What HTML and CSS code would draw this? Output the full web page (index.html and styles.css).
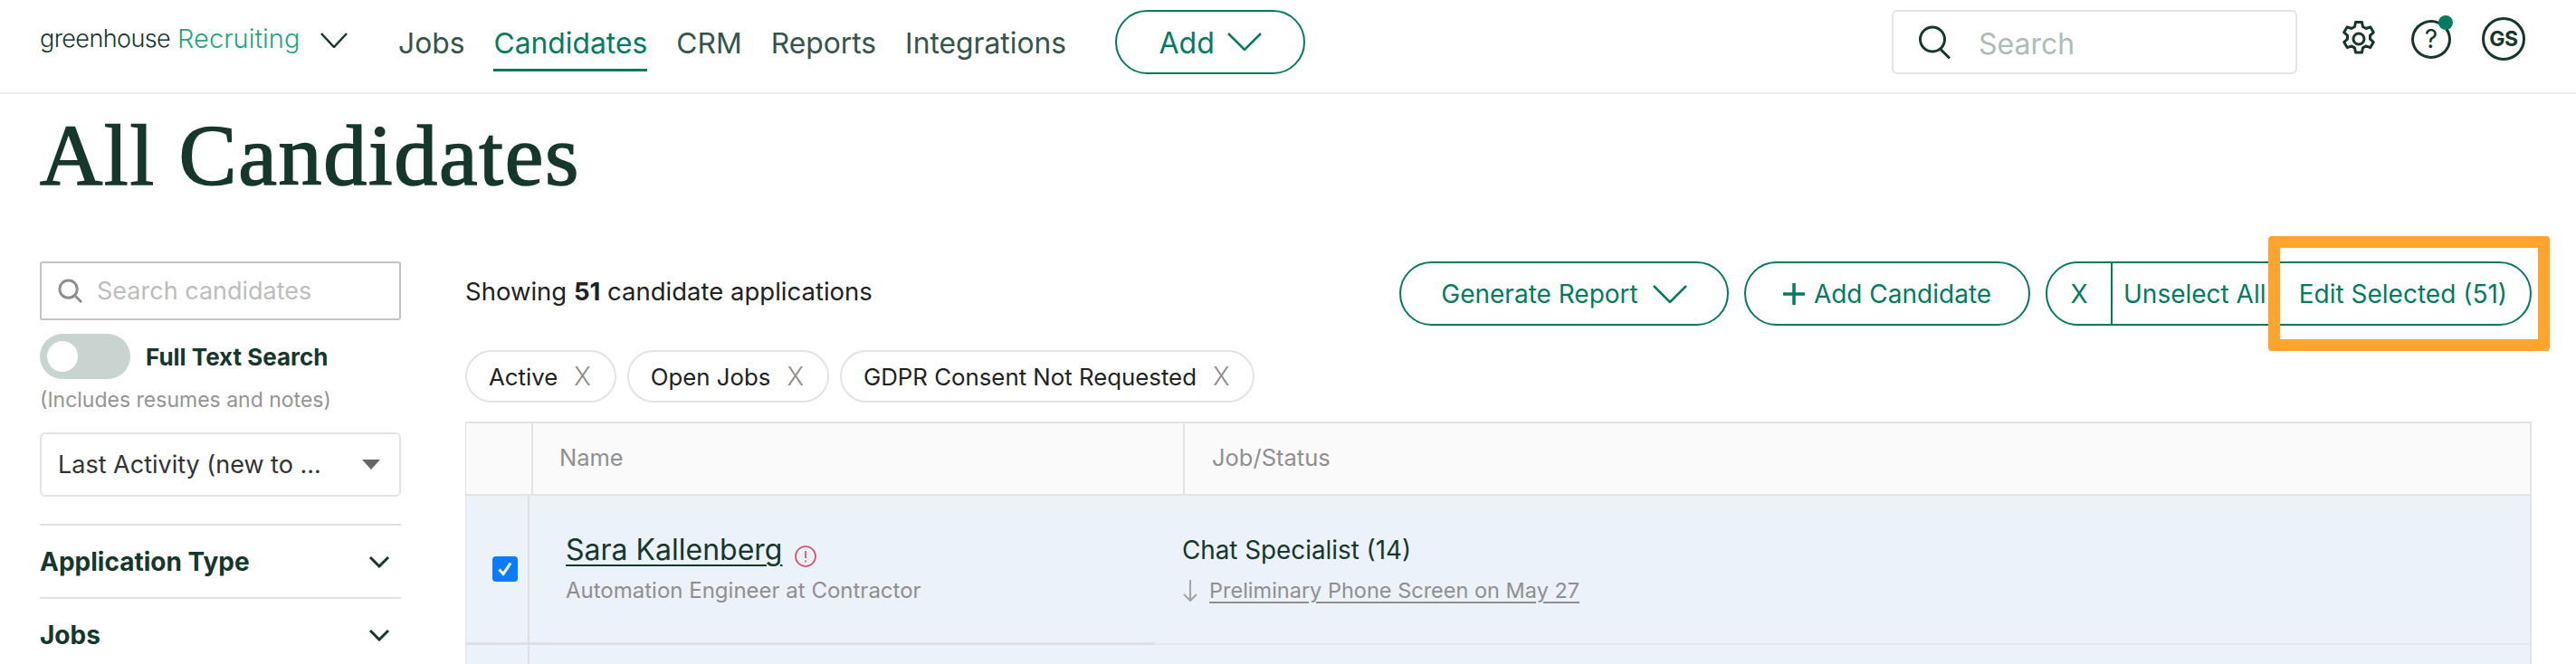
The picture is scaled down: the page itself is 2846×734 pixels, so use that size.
FILE: index.html
```html
<!DOCTYPE html>
<html lang="en">
<head>
<meta charset="utf-8">
<title>All Candidates</title>
<link rel="stylesheet" href="styles.css">
</head>
<body>
<header class="topbar">
  <div class="logo"><span class="logo-main">greenhouse</span><span class="logo-sub">Recruiting</span>
    <svg class="logo-chev" viewBox="0 0 30 17"><path d="M1 1l14 15L29 1"/></svg>
  </div>
  <nav class="nav">
    <a class="nav-link">Jobs</a>
    <a class="nav-link nav-active">Candidates</a>
    <a class="nav-link">CRM</a>
    <a class="nav-link">Reports</a>
    <a class="nav-link">Integrations</a>
  </nav>
  <button class="add-btn">Add
    <svg class="add-chev" viewBox="0 0 38 20"><path d="M1 1l18 18L37 1"/></svg>
  </button>
  <div class="global-search">
    <svg class="global-search-icon" viewBox="0 0 36 36"><circle cx="15" cy="15" r="13.5"/><path d="M24 26l10 10"/></svg>
    <span>Search</span>
  </div>
  <div class="top-icons">
    <svg class="gear" viewBox="0 0 40 40"><path d="M16.5 1.5h7l1 5 3.500 2 4.800-1.700 3.500 6-3.800 3.400v4l3.800 3.400-3.500 6-4.800-1.700-3.500 2-1 5h-7l-1-5-3.500-2-4.800 1.700-3.500-6 3.800-3.400v-4l-3.800-3.400 3.500-6 4.800 1.700 3.500-2z"/><circle cx="20" cy="20" r="6"/></svg>
    <div class="help"><span>?</span><i class="help-dot"></i></div>
    <div class="avatar">GS</div>
  </div>
</header>

<h1 class="page-title">All Candidates</h1>

<div class="layout">
  <aside class="sidebar">
    <div class="side-search">
      <svg class="side-search-icon" viewBox="0 0 28 28"><circle cx="12" cy="12" r="10"/><path d="M19 19l8 8"/></svg>
      <span>Search candidates</span>
    </div>
    <div class="toggle-row"><span class="toggle"><i class="knob"></i></span><b class="toggle-label">Full Text Search</b></div>
    <p class="toggle-note">(Includes resumes and notes)</p>
    <div class="sort-select"><span>Last Activity (new to ...</span><i class="caret"></i></div>
    <div class="filter filter-first"><span>Application Type</span><svg class="filter-chev" viewBox="0 0 24 14"><path d="M2 2l10 10L22 2"/></svg></div>
    <div class="filter"><span>Jobs</span><svg class="filter-chev" viewBox="0 0 24 14"><path d="M2 2l10 10L22 2"/></svg></div>
  </aside>

  <main class="content">
    <div class="toolbar">
      <p class="showing">Showing <b>51</b> candidate applications</p>
      <div class="actions">
        <button class="pill-btn btn-report">Generate Report
          <svg class="report-chev" viewBox="0 0 38 20"><path d="M1 1l18 18L37 1"/></svg>
        </button>
        <button class="pill-btn btn-add"><svg class="plus" viewBox="0 0 24 24"><path d="M12 0v24M0 12h24"/></svg>Add Candidate</button>
        <div class="group">
          <span class="group-x">X</span>
          <span class="group-unselect">Unselect All</span>
          <span class="group-edit">Edit Selected (51)</span>
          <i class="highlight"></i>
        </div>
      </div>
    </div>

    <div class="chips">
      <span class="chip">Active<i class="chip-x">X</i></span>
      <span class="chip">Open Jobs<i class="chip-x">X</i></span>
      <span class="chip">GDPR Consent Not Requested<i class="chip-x">X</i></span>
    </div>

    <div class="table">
      <div class="thead">
        <div class="th"></div>
        <div class="th th-name">Name</div>
        <div class="th th-job">Job/Status</div>
      </div>
      <div class="row">
        <div class="cell-check"><span class="checkbox"><svg viewBox="0 0 28 28"><path d="M7.500 14.500l4.500 5 8-12"/></svg></span></div>
        <div class="cell-name">
          <div class="cand-line"><a class="cand-name">Sara Kallenberg</a>
            <svg class="warn" viewBox="0 0 24 24"><circle cx="12" cy="12" r="11"/><path d="M12 6v8M12 16.500v2"/></svg>
          </div>
          <div class="cand-sub">Automation Engineer at Contractor</div>
        </div>
        <div class="cell-job">
          <div class="job-title">Chat Specialist (14)</div>
          <div class="job-stage"><svg class="arrow" viewBox="0 0 18 24"><path d="M9 0v23M2 16l7 7 7-7"/></svg><a>Preliminary Phone Screen on May 27</a></div>
        </div>
      </div>
      <div class="row row-next">
        <div class="cell-check"></div>
        <div class="cell-name"></div>
        <div class="cell-job"></div>
      </div>
    </div>
  </main>
</div>
</body>
</html>
```
FILE: styles.css
```css
* { box-sizing: border-box; }
html, body { margin: 0; padding: 0; }
body {
  width: 2846px;
  height: 734px;
  overflow: hidden;
  background: #fff;
  font-family: Inter, "Noto Sans", sans-serif;
  color: #15372c;
}
p, h1 { margin: 0; }
svg { display: block; fill: none; }
button { font-family: inherit; background: #fff; padding: 0; }

.topbar {
  display: flex;
  align-items: flex-start;
  height: 104px;
  padding: 11px 56px 0 44px;
  border-bottom: 2px solid #eeeeee;
}
.logo { display: flex; align-items: center; height: 44px; width: 396px; margin-top: 9px; flex: none; }
.logo-main { font-size: 27px; font-weight: 300; letter-spacing: -0.6px; color: #15372c; }
.logo-sub { font-size: 29px; font-weight: 300; letter-spacing: 0; color: #24a47f; margin-left: 8px; }
.logo-chev { width: 30px; height: 17px; margin-left: 23px; margin-top: 4px; }
.logo-chev path { stroke: #15372c; stroke-width: 2.500; }

.nav { display: flex; gap: 32px; flex: none; }
.nav-link {
  font-size: 31.800px;
  line-height: 38px;
  padding: 18px 0 9px;
  color: #36544a;
  border-bottom: 2px solid transparent;
}
.nav-active { color: #047b5e; border-bottom: 3px solid #047b5e; }

.add-btn {
  display: flex;
  align-items: center;
  justify-content: center;
  gap: 14px;
  width: 210px;
  height: 71px;
  margin-left: 54px;
  padding-top: 2px;
  border: 2px solid #047b5e;
  border-radius: 36px;
  color: #047b5e;
  font-size: 32px;
  flex: none;
}
.add-chev { width: 38px; height: 20px; margin-top: -4px; }
.add-chev path, .report-chev path { stroke: #047b5e; stroke-width: 2.500; }

.global-search {
  display: flex;
  align-items: center;
  gap: 30px;
  width: 448px;
  height: 71px;
  margin-left: auto;
  padding-left: 28px;
  border: 2px solid #e1e6e4;
  border-radius: 6px;
  color: #aebcb7;
  font-size: 32px;
}
.global-search span { padding-top: 3px; }
.global-search-icon { width: 36px; height: 37px; overflow: visible; }
.global-search-icon circle, .global-search-icon path { stroke: #15372c; stroke-width: 3; }

.top-icons { display: flex; align-items: center; margin-left: 48px; margin-top: 8px; flex: none; }
.gear { width: 40px; height: 40px; overflow: visible; }
.gear path, .gear circle { stroke: #15372c; stroke-width: 3; stroke-linejoin: round; }
.help {
  position: relative;
  display: flex;
  align-items: center;
  justify-content: center;
  width: 44px;
  height: 43px;
  margin-left: 38px;
  border: 3px solid #15372c;
  border-radius: 50%;
  font-size: 28px;
  font-weight: 400;
  color: #15372c;
}
.help-dot {
  position: absolute;
  top: -8px;
  right: -5px;
  width: 16px;
  height: 16px;
  border-radius: 50%;
  background: #047b5e;
}
.avatar {
  display: flex;
  align-items: center;
  justify-content: center;
  width: 48px;
  height: 48px;
  margin-left: 34px;
  border: 3px solid #15372c;
  border-radius: 50%;
  font-size: 23px;
  font-weight: 700;
  letter-spacing: -0.5px;
}

.page-title {
  padding-left: 44px;
  font-family: "Liberation Serif", serif;
  font-weight: 400;
  font-size: 96px;
  line-height: 110px;
  letter-spacing: 1.7px;
  margin-top: 13px;
  color: #15372c;
  -webkit-text-stroke: 1.6px #15372c;
}

.layout {
  display: grid;
  grid-template-columns: 399px 2283px;
  column-gap: 71px;
  padding-left: 44px;
  margin-top: 62px;
}

.side-search {
  display: flex;
  align-items: center;
  gap: 16px;
  height: 65px;
  padding-left: 18px;
  border: 2px solid #c4c4c4;
  border-radius: 3px;
  color: #bdbdbd;
  font-size: 27px;
}
.side-search-icon { width: 27px; height: 27px; }
.side-search-icon circle, .side-search-icon path { stroke: #8e8e8e; stroke-width: 3; }

.toggle-row { display: flex; align-items: center; gap: 17px; margin-top: 15px; }
.toggle { display: block; width: 100px; height: 50px; padding: 8px; border-radius: 25px; background: #c9d3d0; }
.knob { display: block; width: 34px; height: 34px; border-radius: 50%; background: #fff; }
.toggle-label { font-size: 26px; font-weight: 700; }
.toggle-note { margin-top: 7px; font-size: 23px; line-height: 32px; color: #949494; }

.sort-select {
  display: flex;
  align-items: center;
  justify-content: space-between;
  height: 71px;
  margin-top: 20px;
  padding: 0 21px 0 18px;
  border: 2px solid #e3e3e3;
  border-radius: 6px;
  font-size: 27px;
  color: #333;
}
.caret { width: 0; height: 0; border-style: solid; border-width: 11px 10px 0; border-color: #666 transparent transparent; }

.filter {
  display: flex;
  align-items: center;
  justify-content: space-between;
  height: 81px;
  padding-right: 12px;
  border-top: 2px solid #e1e1e1;
  font-size: 28px;
  font-weight: 700;
}
.filter-first { margin-top: 30px; }
.filter-chev { width: 24px; height: 14px; }
.filter-chev path { stroke: #15372c; stroke-width: 3; }

.toolbar { display: flex; justify-content: space-between; align-items: flex-start; }
.showing { font-size: 27.500px; line-height: 66px; color: #222; }
.actions { display: flex; gap: 17px; }
.pill-btn {
  display: flex;
  align-items: center;
  justify-content: center;
  height: 71px;
  border: 2px solid #047b5e;
  border-radius: 36px;
  color: #047b5e;
  font-size: 28px;
}
.btn-report { width: 364px; gap: 16px; }
.report-chev { width: 38px; height: 20px; }
.btn-add { width: 316px; gap: 10px; }
.plus { width: 24px; height: 24px; }
.plus path { stroke: #047b5e; stroke-width: 3.500; }
.group {
  position: relative;
  display: flex;
  align-items: center;
  width: 537px;
  height: 71px;
  border: 2px solid #047b5e;
  border-radius: 36px;
  color: #047b5e;
  font-size: 28px;
}
.group-x { display: flex; align-items: center; justify-content: center; width: 72px; height: 100%; border-right: 2px solid #047b5e; }
.group-unselect { margin-left: 12px; }
.group-edit { margin-left: auto; margin-right: 25px; }
.highlight {
  position: absolute;
  top: -30px;
  right: -22px;
  width: 311px;
  height: 127px;
  border: 13px solid #ffa42d;
  border-radius: 4px;
}

.chips { display: flex; gap: 12px; margin-top: 27px; }
.chip {
  display: flex;
  align-items: center;
  gap: 18px;
  height: 58px;
  padding: 0 26px 0 24px;
  border: 2px solid #e3e3e3;
  border-radius: 29px;
  font-size: 25.800px;
  color: #222;
}
.chip-x { font-style: normal; font-weight: 300; font-size: 28px; color: #8b8b8b; }

.table { margin-top: 21px; }
.thead {
  display: grid;
  grid-template-columns: 72px 720px 1fr;
  height: 82px;
  background: #fafafa;
  border-top: 2px solid #e3e3e3;
  border-bottom: 2px solid #e3e3e3;
  border-right: 2px solid #e3e3e3;
  border-left: 1px solid #e3e3e3;
}
.th { display: flex; align-items: center; padding-bottom: 3px; font-size: 25.500px; color: #8f8f8f; }
.th-name { padding-left: 29px; border-left: 2px solid #e3e3e3; }
.th-job { padding-left: 30px; border-left: 2px solid #e3e3e3; }

.row {
  display: grid;
  grid-template-columns: 70px 690px 1fr;
  height: 165px;
  background: #ebf2fa;
  border-left: 1px solid #e3e3e3;
  border-right: 2px solid #e3e3e3;
}
.row-next { height: 40px; }
.cell-check { display: flex; align-items: center; justify-content: center; padding-left: 18px; border-right: 2px solid #e0e0e0; border-bottom: 3px solid #e0e0e0; }
.cell-name { padding: 40px 0 0 40px; border-bottom: 3px solid #e0e0e0; }
.cell-job { padding: 40px 0 0 31px; border-bottom: 2px solid #e4e8ec; }
.row-next .cell-check, .row-next .cell-name, .row-next .cell-job { border-bottom: 0; }
.checkbox { display: block; width: 28px; height: 28px; border-radius: 4px; background: #0b7bff; }
.checkbox path { stroke: #fff; stroke-width: 3; }
.cand-line { display: flex; align-items: flex-start; gap: 14px; }
.cand-name { font-size: 32px; line-height: 40px; color: #15372c; text-decoration: underline; text-underline-offset: 5px; text-decoration-thickness: 2px; }
.warn { width: 24px; height: 24px; margin-top: 15px; }
.warn circle, .warn path { stroke: #e0425e; stroke-width: 1.600; }
.cand-sub { margin-top: 9px; font-size: 24px; line-height: 32px; color: #8f8f8f; }
.job-title { font-size: 27.800px; line-height: 40px; color: #15372c; }
.job-stage { display: flex; align-items: center; gap: 12px; margin-top: 9px; font-size: 23.500px; line-height: 32px; color: #8f8f8f; }
.job-stage a { text-decoration: underline; text-underline-offset: 4px; }
.arrow { width: 18px; height: 24px; }
.arrow path { stroke: #a3a3a3; stroke-width: 2; }
```
